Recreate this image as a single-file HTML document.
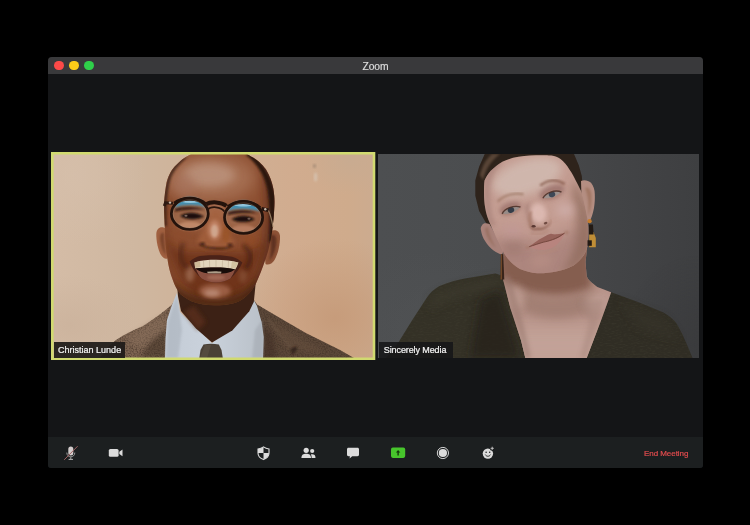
<!DOCTYPE html>
<html lang="en">
<head>
<meta charset="utf-8">
<title>Zoom</title>
<style>
  html,body{margin:0;padding:0;background:#000;}
  body{width:750px;height:525px;position:relative;overflow:hidden;font-family:"Liberation Sans",Arial,sans-serif;}
  #win{position:absolute;left:48px;top:57px;width:655px;height:411px;background:#141517;border-radius:4px 4px 3px 3px;overflow:hidden;}
  #titlebar{position:absolute;left:0;top:0;width:100%;height:17px;background:#39393b;}
  #title{will-change:transform;position:absolute;left:0;width:100%;top:3.8px;-webkit-text-stroke:.2px #dcdcdc;text-align:center;color:#dcdcdc;font-size:10.3px;line-height:12px;letter-spacing:-0.1px;}
  .tl{position:absolute;top:3.8px;width:9.6px;height:9.6px;border-radius:50%;}
  #toolbar{position:absolute;left:0;top:380.4px;width:100%;height:31px;background:#1c1f20;}
  .label{position:absolute;height:15.5px;line-height:17px;overflow:hidden;will-change:transform;-webkit-text-stroke:.22px #f2f2f2;color:#f2f2f2;font-size:9px;background:rgba(22,22,24,.88);white-space:nowrap;}
  #end{will-change:transform;position:absolute;left:643.6px;top:448.7px;color:#e24c4e;-webkit-text-stroke:.2px #e24c4e;font-size:8px;line-height:10px;white-space:nowrap;letter-spacing:-0.05px;}
  #art{position:absolute;left:0;top:0;}
</style>
</head>
<body>
<div id="win">
  <div id="titlebar">
    <div class="tl" style="left:6.2px;background:#fc4a48;"></div>
    <div class="tl" style="left:21.2px;background:#fdcb18;"></div>
    <div class="tl" style="left:36px;background:#2fd04a;"></div>
    <div id="title">Zoom</div>
  </div>
  <div id="toolbar"></div>
</div>

<svg id="art" width="750" height="525" viewBox="0 0 750 525">
  <defs>
    <clipPath id="cL"><rect x="53.6" y="154.6" width="319.1" height="202.8"/></clipPath>
    <clipPath id="cR"><rect x="378.7" y="154" width="319.6" height="203.7"/></clipPath>
    <filter id="soft" x="0" y="0" width="100%" height="100%" filterUnits="userSpaceOnUse" color-interpolation-filters="sRGB"><feGaussianBlur stdDeviation=".45"/></filter>
    <filter id="b1" x="-20%" y="-20%" width="140%" height="140%"><feGaussianBlur stdDeviation="1"/></filter>
    <filter id="b2" x="-30%" y="-30%" width="160%" height="160%"><feGaussianBlur stdDeviation="2"/></filter>
    <filter id="b4" x="-40%" y="-40%" width="180%" height="180%"><feGaussianBlur stdDeviation="4"/></filter>
    <filter id="b8" x="-50%" y="-50%" width="200%" height="200%"><feGaussianBlur stdDeviation="8"/></filter>
    <filter id="b20" x="-60%" y="-60%" width="220%" height="220%"><feGaussianBlur stdDeviation="20"/></filter>
    <filter id="tweed" x="0" y="0" width="100%" height="100%" color-interpolation-filters="sRGB">
      <feTurbulence type="fractalNoise" baseFrequency="0.75" numOctaves="2" seed="3" result="n"/>
      <feColorMatrix in="n" type="matrix" values="0 0 0 0 0.25  0 0 0 0 0.19  0 0 0 0 0.15  0 0 0 1.6 -0.62" result="n2"/>
      <feComposite in="n2" in2="SourceGraphic" operator="in" result="n3"/>
      <feMerge><feMergeNode in="SourceGraphic"/><feMergeNode in="n3"/></feMerge>
    </filter>
    <filter id="knit" x="0" y="0" width="100%" height="100%" color-interpolation-filters="sRGB">
      <feTurbulence type="fractalNoise" baseFrequency="0.25 0.9" numOctaves="2" seed="8" result="n"/>
      <feColorMatrix in="n" type="matrix" values="0 0 0 0 0.26  0 0 0 0 0.25  0 0 0 0 0.20  0 0 0 1.0 -0.45" result="n2"/>
      <feComposite in="n2" in2="SourceGraphic" operator="in" result="n3"/>
      <feMerge><feMergeNode in="SourceGraphic"/><feMergeNode in="n3"/></feMerge>
    </filter>
    <radialGradient id="rgF" cx="0.5" cy="0.5" r="0.5"><stop offset="0" stop-color="#cbb29c" stop-opacity=".8"/><stop offset="1" stop-color="#cbb29c" stop-opacity="0"/></radialGradient>
    <radialGradient id="rgA" cx="0.5" cy="0.5" r="0.5"><stop offset="0" stop-color="#c69b7a" stop-opacity=".95"/><stop offset="1" stop-color="#c69b7a" stop-opacity="0"/></radialGradient>
    <radialGradient id="rgB" cx="0.5" cy="0.5" r="0.5"><stop offset="0" stop-color="#d6c0ac" stop-opacity=".9"/><stop offset="1" stop-color="#d6c0ac" stop-opacity="0"/></radialGradient>
    <radialGradient id="rgC" cx="0.5" cy="0.5" r="0.5"><stop offset="0" stop-color="#c8ab91" stop-opacity=".9"/><stop offset="1" stop-color="#c8ab91" stop-opacity="0"/></radialGradient>
    <radialGradient id="rgD" cx="0.5" cy="0.5" r="0.5"><stop offset="0" stop-color="#353537" stop-opacity=".8"/><stop offset="1" stop-color="#353537" stop-opacity="0"/></radialGradient>
    <radialGradient id="rgE" cx="0.5" cy="0.5" r="0.5"><stop offset="0" stop-color="#525456" stop-opacity=".8"/><stop offset="1" stop-color="#525456" stop-opacity="0"/></radialGradient>
    <linearGradient id="bgL" x1="0" x2="1" y1="0" y2="0">
      <stop offset="0" stop-color="#d4bca6"/>
      <stop offset="0.26" stop-color="#cfb7a0"/>
      <stop offset="0.5" stop-color="#cfb196"/>
      <stop offset="0.75" stop-color="#d1ac8f"/>
      <stop offset="0.92" stop-color="#cfab8c"/>
      <stop offset="1" stop-color="#ccab8f"/>
    </linearGradient>
    <linearGradient id="shirtG" x1="0" x2="1" y1="0" y2="0">
      <stop offset="0" stop-color="#c4ccd6"/>
      <stop offset="0.45" stop-color="#cad2dc"/>
      <stop offset="1" stop-color="#b9c0c8"/>
    </linearGradient>
    <linearGradient id="bgR" x1="0" x2="1" y1="0" y2="0">
      <stop offset="0" stop-color="#4d4f51"/>
      <stop offset="0.35" stop-color="#4b4d4f"/>
      <stop offset="0.7" stop-color="#444547"/>
      <stop offset="1" stop-color="#3e3f41"/>
    </linearGradient>
    <clipPath id="cHeadL"><path d="M164,204 C164.5,195 165.5,188 166.7,182 C169,174 172,169 176.3,165 C180,161 184,158 189,155.3 C196,151 205,148 220,148 C235,148 244,152 251,156.4 C258,160 262,164 265.9,169.2 C270,176 272,182 273.3,188.4 C274.5,196 274.6,200 274.4,205.5 C274,215 273,225 272,232 C270,245 267.5,254 264.5,262 C262,269 259.5,276 256,283.2 C253,289 250,293 246.4,296 C242,300 238,302 233.6,303.2 C227,305 221,305.3 214.7,305.3 C206,305.3 198,304 192,301.6 C187,299 184,297 180.8,294.4 C177,290 174.5,285 172.8,280 C170,273 168.5,266 167.5,259.2 C166,250 165,240 165,232 C164.5,222 164,212 164,204 Z"/></clipPath>
    <clipPath id="cHeadR"><path d="M489.8,223 C487.5,218 486,213 485.2,207.9 C484.3,203 484,198 484,192.7 C484,188 484,184 484.5,180.5 C486,177 488,174 490.5,171 C493.5,168 496.5,165.5 500,163.2 C503.5,161 508,159.3 513,157.8 C520,156 528,155.2 536,155.2 C544,155.2 548,155.2 551.3,155.6 C555,156 558,157.5 560.5,159.1 C564,162 567,165.5 569.6,169.8 C572,173 574,177 575.7,180.5 C578,184.5 579.5,188 581,191.1 C582,194 582.7,196 583.3,198.8 C585,206 586.5,214 587.9,221.6 C588.8,230 588.6,238 587.5,244.7 C586.8,249 585.7,252 584,255 C581,259.5 577.5,262.5 573.6,265.5 C568,268.5 562,270.3 556.3,271.5 C550,272.8 543.5,273.5 537.2,273.3 C531,272.7 525.5,271.2 519.9,269 C515,266 511,262.5 507.7,258.5 C505.5,255.5 503.5,252.5 502,249 C498,241 493.5,232 489.8,223 Z"/></clipPath>
    <clipPath id="cChestR"><path d="M503.5,252 L502.7,278 L510.4,308.3 L521,340.3 L525.3,358 L586.7,358 L601.6,319 L611.2,292.3 L597.3,287 C592,283 588,280 586.7,276.3 L585.5,262 L588,240 Z"/></clipPath>
  </defs>

  <!-- LEFT TILE -->
  <rect x="51" y="152" width="324.3" height="208" fill="#d1da70"/>
  <g clip-path="url(#cL)" id="photoL"><g filter="url(#soft)">
    <rect x="53" y="154" width="320" height="204" fill="url(#bgL)"/>
    <!-- background mottling -->
    <ellipse cx="75" cy="175" rx="70" ry="70" fill="url(#rgB)" opacity=".7"/>
    <ellipse cx="335" cy="318" rx="90" ry="80" fill="url(#rgA)"/>
    <ellipse cx="70" cy="325" rx="70" ry="50" fill="url(#rgF)"/>
    <ellipse cx="350" cy="160" rx="45" ry="35" fill="url(#rgC)"/>
    <ellipse cx="314.5" cy="166" rx="1.6" ry="2" fill="#9a8270" opacity=".7" filter="url(#b1)"/>
    <ellipse cx="315.6" cy="177" rx="1.8" ry="4.5" fill="#d8cabc" opacity=".6" filter="url(#b1)"/>
    <!-- jacket -->
    <g filter="url(#tweed)">
      <path d="M100,358 L108,347 L116,340 C125,334 134,330 142.7,326.3 C150,322 157,316.5 164,311.3 L171.5,305 L175,300 L178,330 L170,358 Z" fill="#7e6552"/>
      <path d="M254,300 L257,304.5 L280,318 L305.3,332.7 L339.5,349.7 L354,358 L255,358 Z" fill="#5c4839"/>
    </g>
    <g filter="url(#b2)" opacity=".5">
      <path d="M125,338 L165,314 L167,328 L140,348 Z" fill="#8a705c"/>
      <path d="M268,320 L300,338 L325,352 L290,350 Z" fill="#66503e"/>
      <path d="M150,342 L166,328 L166,358 L140,358 Z" fill="#3e2e24"/>
      <path d="M263,325 L273,335 L277,358 L263,358 Z" fill="#3e2c22"/>
    </g>
    <path d="M290.5,349 L296.5,346 L297,350 L292.5,355 Z" fill="#2a1c16" opacity=".75" filter="url(#b1)"/>
    <path d="M291,348 C282,338 274,328 268,318" stroke="#74604e" stroke-width="1.2" fill="none" opacity=".5" filter="url(#b1)"/>
    <!-- shirt -->
    <path d="M177,293 L171.8,305.5 L167,320 L165.5,338 L165,358 L263,358 L263.7,337 L261.6,322 L257,306 L253,298.5 L250,310 L212,343 L180,312 Z" fill="url(#shirtG)"/>
    <path d="M177,293 L173,306 L168,322 L166,358 L178,358 L182,330 Z" fill="#aab2bc" opacity=".6" filter="url(#b1)"/>
    <path d="M262,320 L263.5,340 L263,358 L252,358 L255,330 Z" fill="#a0a6ae" opacity=".5" filter="url(#b1)"/>
    <!-- tie -->
    <path d="M203.5,344.4 C208,343.6 214,343.6 218.8,344.4 L221.5,350 L222.8,358 L199.3,358 L200.5,350 Z" fill="#4a4036"/>
    <path d="M205,345 L211,345 L207,358 L200,358 Z" fill="#5c5145" opacity=".6"/>
    <!-- neck -->
    <path d="M177,285 L178,296 L181,311 L196,328.4 L212,342.5 L232.3,330.5 L249.3,311.3 L253.8,302 L256,280 Z" fill="#3c2115"/>
    <path d="M184,312 L198,330 L206,322 L194,306 Z" fill="#5a2e1a" opacity=".8" filter="url(#b2)"/>
    <!-- ears -->
    <path d="M166.5,229 C162,225.5 156.5,227 156.3,234 C156.2,241 158,250 161,255 C163,258 165.5,259.5 167.5,258.4 L169,245 Z" fill="#a06040"/>
    <path d="M164,233 C160.5,232 159.5,236 160.5,242 C161.5,248 163.5,253 166,255 C164.5,248 164,240 164,233 Z" fill="#6a3822" opacity=".75" filter="url(#b1)"/>
    <path d="M268,233 C271,229.5 279,228 280,236 C280.3,244 278,254 274.5,260 C272,264 268,265.5 265.5,264 L264,248 Z" fill="#8c5236"/>
    <path d="M270,236 C274,233 277,236 276.5,242 C276,250 273,257 269,261 C271,254 271.5,244 270,236 Z" fill="#552a1a" opacity=".8" filter="url(#b1)"/>
    <!-- head -->
    <path id="headL" d="M164,204 C164.5,195 165.5,188 166.7,182 C169,174 172,169 176.3,165 C180,161 184,158 189,155.3 C196,151 205,148 220,148 C235,148 244,152 251,156.4 C258,160 262,164 265.9,169.2 C270,176 272,182 273.3,188.4 C274.5,196 274.6,200 274.4,205.5 C274,215 273,225 272,232 C270,245 267.5,254 264.5,262 C262,269 259.5,276 256,283.2 C253,289 250,293 246.4,296 C242,300 238,302 233.6,303.2 C227,305 221,305.3 214.7,305.3 C206,305.3 198,304 192,301.6 C187,299 184,297 180.8,294.4 C177,290 174.5,285 172.8,280 C170,273 168.5,266 167.5,259.2 C166,250 165,240 165,232 C164.5,222 164,212 164,204 Z" fill="#8c4e30"/>
    <g clip-path="url(#cHeadL)">
      <!-- forehead light -->
      <ellipse cx="210" cy="178" rx="46" ry="24" fill="#a66f52" filter="url(#b8)"/>
      <ellipse cx="209" cy="175" rx="26" ry="12" fill="#b98f78" opacity=".95" filter="url(#b4)"/>
      <ellipse cx="184" cy="184" rx="11" ry="11" fill="#a8755e" opacity=".6" filter="url(#b4)"/>
      <!-- mid-face -->
      <ellipse cx="212" cy="219" rx="38" ry="12" fill="#a2684a" opacity=".55" filter="url(#b4)"/>
      <ellipse cx="216" cy="212" rx="8" ry="9" fill="#b07a60" opacity=".7" filter="url(#b2)"/>
      <!-- right side shadow -->
      <path d="M262,160 L282,160 L282,270 L252,302 L240,300 C256,282 265,250 266,215 C266,195 265,177 262,160 Z" fill="#4c2414" opacity=".6" filter="url(#b4)"/>
      <!-- lower face darker, saturated -->
      <path d="M164,236 C172,262 180,284 196,300 L236,300 C250,286 258,266 264,240 C250,258 232,252 216,250 C200,252 180,258 164,236 Z" fill="#5e2810" opacity=".62" filter="url(#b4)"/>
      <!-- cheeks -->
      <ellipse cx="180" cy="236" rx="8" ry="4" fill="#8e4c2a" opacity=".5" filter="url(#b4)"/>
      <ellipse cx="250" cy="240" rx="7" ry="5" fill="#96491f" opacity=".6" filter="url(#b4)"/>
      <!-- mouth-side lighter -->
      <ellipse cx="190" cy="274" rx="4.5" ry="8" fill="#a5735a" opacity=".7" filter="url(#b2)"/>
      <ellipse cx="243" cy="276" rx="4" ry="7" fill="#8c573c" opacity=".6" filter="url(#b2)"/>
      <!-- nose -->
      <path d="M210,208 C209,218 205,229 198.5,238 C196.5,242 198.5,246.5 204,247.5 C211,250 222,250 229,248.5 C234.5,247.5 235.5,243 233,239 C227,230 223,219 222,209 Z" fill="#a3603e" opacity=".85" filter="url(#b2)"/>
      <ellipse cx="226" cy="234" rx="4" ry="9" fill="#96501e" opacity=".6" filter="url(#b2)"/>
      <ellipse cx="214.5" cy="230" rx="6" ry="10" fill="#c88c70" opacity=".9" filter="url(#b2)"/>
      <ellipse cx="214.5" cy="231" rx="3.4" ry="6.2" fill="#d0a890" opacity=".95" filter="url(#b1)"/>
      <path d="M197.5,243.5 C202,250 228,252 235,245.5 C228,248.8 205,248.3 197.5,243.5 Z" fill="#32140c" opacity=".85" filter="url(#b1)"/>
      <ellipse cx="202.5" cy="244" rx="2.8" ry="1.7" fill="#2a100a" opacity=".7" filter="url(#b1)"/>
      <ellipse cx="230" cy="245" rx="2.8" ry="1.7" fill="#2a100a" opacity=".7" filter="url(#b1)"/>
      <!-- chin/jaw shadow -->
      <path d="M172,280 C188,303 240,306 258,278 L264,312 L168,312 Z" fill="#43200f" opacity=".8" filter="url(#b4)"/>
      <ellipse cx="215" cy="291" rx="16" ry="7" fill="#a0644a" opacity=".9" filter="url(#b2)"/>
      <ellipse cx="212" cy="293" rx="8" ry="3.5" fill="#ba8a76" opacity=".95" filter="url(#b2)"/>
      <!-- left face edge -->
      <path d="M163,200 L169,200 C167,225 169,255 177,285 L168,285 Z" fill="#6a3620" opacity=".35" filter="url(#b2)"/>
      <!-- hair -->
      <path d="M249,153 C263,161 271.5,176 275,195 L276,242 L269,242 C270,226 270,205 267.5,190 C264,173 256,163 246,155 Z" fill="#2a1810" filter="url(#b1)"/>
      <path d="M181,158 C170,166 165,180 163,204 L164,226 L167,226 C166,210 167,190 171,178 C174,170 180,163 188,157 Z" fill="#3a2218" opacity=".8" filter="url(#b1)"/>
    </g>
    <!-- smile lines -->
    <path d="M183.5,243 C181,248 180,253 181,258 C182,262 185,266 188,268" stroke="#431e12" stroke-width="4" fill="none" opacity=".6" filter="url(#b2)"/>
    <path d="M243,245 C247,248 250,252 250.4,256 C250.5,261 248,266 245,269" stroke="#36170c" stroke-width="4" fill="none" opacity=".65" filter="url(#b2)"/>
    <!-- mouth -->
    <path d="M189.6,261.6 C193,258.5 196.5,256.7 200,256 C205,255.2 211,255 216,255.2 C222,255.2 227,255.8 232,256.8 C236,258 239.5,260 242.4,262.4 C240,268 236,273.5 230.4,278.4 C226,281 221,282.4 216,282.4 C211,282.4 206,281 201.6,278.4 C196,274 192,268 189.6,261.6 Z" fill="#4a2218"/>
    <path d="M194.4,262.4 C201,260.3 209,259.8 216,259.8 C224,259.8 232,260.6 238.4,262.4 C237.5,265.3 236.5,267.5 235.2,269.4 C229,268 222,267.6 216,267.6 C209,267.6 201,268 195.2,268.6 Z" fill="#e3d6bd"/>
    <path d="M203.5,260.6 L203.8,267.8 M209.5,260.2 L209.7,267.6 M216,260 L216,267.6 M222.5,260.2 L222.3,267.6 M228.5,260.8 L228.2,268" stroke="#a89478" stroke-width=".5" opacity=".7" fill="none"/>
    <path d="M194.4,262.4 L200,261 L200.5,267 L195.2,268 Z" fill="#c4ae88" opacity=".7"/>
    <path d="M232,261.3 L238.4,262.4 L235.2,268.8 L231,268 Z" fill="#c8b48e" opacity=".6"/>
    <path d="M195.2,268.4 C201,267.8 209,267.4 216,267.4 C222,267.4 229,267.8 235.2,269.2 C233,271.5 230,273 226,273.4 L206,273.4 C201,272.4 198,270.8 195.2,268.4 Z" fill="#170b08"/>
    <path d="M207,271.8 C212,271 218,271 221.5,271.8 L221,273.6 L208,273.6 Z" fill="#c8b8a0" opacity=".85"/>
    <path d="M196,269 C199,271 203,272.8 207,273.2 C213,274 220,274 226,273.2 C230,272.5 233,271 235,269.2 C234,273 232,276 230.4,278.4 C226,281 221,282.4 216,282.4 C211,282.4 206,281 201.6,278.4 C199,276 197,272.5 196,269 Z" fill="#8a5040"/>
    <ellipse cx="216" cy="277.5" rx="9" ry="2.6" fill="#a66e5a" opacity=".8" filter="url(#b1)"/>
    <!-- lens tint -->
    <ellipse cx="189.8" cy="213.8" rx="17.5" ry="14.8" fill="#c8a98e" opacity=".2"/>
    <ellipse cx="243.6" cy="217.4" rx="18" ry="15.2" fill="#c8a98e" opacity=".16"/>
    <ellipse cx="190" cy="226" rx="12" ry="4.2" fill="#bf8868" opacity="1" filter="url(#b1)"/>
    <ellipse cx="243.5" cy="229.5" rx="12" ry="4.2" fill="#b67c5e" opacity="1" filter="url(#b1)"/>
    <!-- eyes + brows inside lenses -->
    <path d="M175,209 C182,206 196,206 205,209.5 C198,209.3 184,209.3 175,211.5 Z" fill="#2e160e" opacity=".9" filter="url(#b1)"/>
    <path d="M228,212.5 C236,209 250,209.5 258,213.5 C250,212.6 237,212.6 228,215 Z" fill="#28120c" opacity=".9" filter="url(#b1)"/>
    <path d="M180,216 C186,211.5 197,211.5 204,216.5 C197,220.2 187,220.2 180,216 Z" fill="#1c0d09" filter="url(#b1)"/>
    <path d="M231.5,219.2 C238,214.5 249,214.5 255,219.2 C248,223 238,223 231.5,219.2 Z" fill="#1a0b07" filter="url(#b1)"/>
    <ellipse cx="186" cy="215.8" rx="1.6" ry="1" fill="#b8a090" opacity=".6"/>
    <ellipse cx="249" cy="218.8" rx="1.6" ry="1" fill="#b8a090" opacity=".5"/>
    <!-- lens reflections -->
    <path d="M174,207.5 C177,199.5 185,197.2 190,197.2 C196,197.2 204,200 207,207.5 C198,204.2 184,204.2 174,207.5 Z" fill="#4290b2" filter="url(#b1)"/>
    <path d="M181,201.8 C187,199.3 194,199.3 200,201.8 C194,203.4 187,203.4 181,201.8 Z" fill="#9acbe0" opacity=".9"/>
    <path d="M227,211 C230,203.5 238,200.7 244,200.7 C250,200.7 257,204 260,211.5 C251,208.2 237,207.8 227,211 Z" fill="#4290b2" filter="url(#b1)"/>
    <path d="M233,205.2 C239,202.8 247,202.8 252,205.6 C247,207 239,206.8 233,205.2 Z" fill="#9acbe0" opacity=".9"/>
    <!-- glasses frame -->
    <ellipse cx="189.8" cy="213.8" rx="18.4" ry="15.6" fill="none" stroke="#24130c" stroke-width="2.9"/>
    <ellipse cx="243.6" cy="217.4" rx="19" ry="16" fill="none" stroke="#22120b" stroke-width="2.9"/>
    <path d="M174.5,203.5 C182,197.3 198,197.3 205.5,204" stroke="#22120b" stroke-width="3.6" fill="none"/>
    <path d="M228,207 C236,200.3 252,200.8 260,208" stroke="#22120b" stroke-width="3.6" fill="none"/>
    <ellipse cx="189.8" cy="213.8" rx="16.8" ry="14" fill="none" stroke="#b09880" stroke-width=".6" opacity=".55"/>
    <ellipse cx="243.6" cy="217.4" rx="17.4" ry="14.4" fill="none" stroke="#b09880" stroke-width=".6" opacity=".55"/>
    <path d="M206,204.3 C211,201.3 221,201.8 226.5,205.8" stroke="#24130c" stroke-width="4" fill="none"/>
    <path d="M207.8,209.5 C211,206 221,206.5 224.3,211.5" stroke="#2a160e" stroke-width="1.8" fill="none"/>
    <path d="M173,203.2 L165.5,202.8 L164.3,206" stroke="#2e1a12" stroke-width="3" fill="none"/>
    <circle cx="170" cy="202.6" r="1.2" fill="#c8b8a8"/>
    <path d="M261.5,208.8 L268.5,210.3" stroke="#24140e" stroke-width="3.6" fill="none"/>
    <circle cx="265.3" cy="209.3" r="1.2" fill="#c8b8a8"/>
    <path d="M268.5,210.5 C270.5,215 272,221 273,227" stroke="#a89070" stroke-width="1.2" fill="none" opacity=".8"/>
  </g></g>

  <!-- RIGHT TILE -->
  <g clip-path="url(#cR)" id="photoR"><g filter="url(#soft)">
    <rect x="378" y="154" width="321" height="204" fill="url(#bgR)"/>
    <ellipse cx="700" cy="345" rx="80" ry="90" fill="url(#rgD)" opacity=".5"/>
    <ellipse cx="430" cy="330" rx="100" ry="80" fill="url(#rgE)" opacity=".6"/>
    <!-- blouse -->
    <g filter="url(#knit)">
    <path d="M386,358 L398.4,342.5 L412,320.5 L426.3,298.5 C431,291.5 436,287.5 441,285.5 C449,281.8 457,279.8 465,278.4 L495.5,273.6 L503,276 L530,300 L535,358 Z" fill="#343126"/>
    <path d="M605,290 L611.2,292.3 L637.9,302 L663.5,312.6 C669,316 673,319 676.3,323.3 C681,331 684,338 686.9,344.6 L692.5,358 L580,358 Z" fill="#302d24"/>
    </g>
    <!-- blouse shading -->
    <path d="M430,298 C445,288 470,282 497,277 L505,290 C480,290 450,298 430,310 Z" fill="#3e3a2e" opacity=".6" filter="url(#b4)"/>
    <path d="M480,300 L500,290 L520,358 L470,358 Z" fill="#201e18" opacity=".6" filter="url(#b4)"/>
    <path d="M620,300 L665,318 L680,340 L640,330 Z" fill="#37342a" opacity=".5" filter="url(#b4)"/>
    <!-- chest / neck skin -->
    <path id="chestR" d="M503.5,252 L502.7,278 L510.4,308.3 L521,340.3 L525.3,358 L586.7,358 L601.6,319 L611.2,292.3 L597.3,287 C592,283 588,280 586.7,276.3 L585.5,262 L588,240 Z" fill="#b8948a"/>
    <g clip-path="url(#cChestR)">
      <!-- vertical falloff: dark under chin -> lighter at bottom -->
      <rect x="495" y="326" width="125" height="40" fill="#c4a49a" opacity=".85" filter="url(#b8)"/>
      <path d="M498,250 L592,240 L592,288 C572,298 540,298 516,288 L498,276 Z" fill="#80594a" opacity=".9" filter="url(#b4)"/>
      <path d="M520,290 C540,300 570,300 596,288 L598,308 C575,322 540,322 522,310 Z" fill="#9a776b" opacity=".7" filter="url(#b4)"/>
      <ellipse cx="597" cy="303" rx="12" ry="10" fill="#c2a298" opacity=".8" filter="url(#b4)"/>
      <ellipse cx="515" cy="298" rx="9" ry="12" fill="#be9c92" opacity=".85" filter="url(#b4)"/>
      <path d="M503,278 L510.4,308.3 L521,340.3 L525.3,358 L531,358 L520,310 L510,276 Z" fill="#94746a" opacity=".5" filter="url(#b2)"/>
      <path d="M578,300 L604,300 L596,330 L586,358 L580,358 L589,322 Z" fill="#a08076" opacity=".4" filter="url(#b2)"/>
    </g>
    <!-- hair -->
    <path d="M489,227 L485.2,221.6 L479.1,211 L475.3,195.7 L475.3,180.5 L479.1,166.8 L484.5,154.6 L486,150 L573,150 L574.2,154.6 L578.8,165.2 L581.8,175.9 L583.5,199 L560,200 L500,225 Z" fill="#2e231b"/>
    <path d="M480,175 C482,166 486,159 492,154 L500,154 C492,160 486,168 483,180 Z" fill="#6a5242" opacity=".7" filter="url(#b1)"/>
    <!-- ears -->
    <path d="M581,181 C584,179.5 588.5,180.5 591,182.8 C593.5,186 594.8,190 594.8,194.2 C595,199 594.8,203 594,207.9 C593,212 592.5,215 591,218.6 C590,220.5 589,221.5 587.9,221.8 L582,215 Z" fill="#b48e82"/>
    <path d="M585,188 C588,186 591,189 591.5,195 C592,203 590.5,211 588,216 C589,208 589,198 585,188 Z" fill="#9a6e58" opacity=".7" filter="url(#b1)"/>
    <path d="M489.5,224 C486,222.5 483,223 482.2,225 C480.5,227 480.6,228.5 480.9,230 C481.5,234 483,238 485.2,241.2 C487.5,245 490.5,248 493.9,250.7 C496.5,252.5 499,253.8 502,254.5 L504,250 Z" fill="#a8827a"/>
    <path d="M485,228 C485,234 489,242 496,248 C492,241 489,234 488,227 Z" fill="#946c5c" opacity=".7" filter="url(#b1)"/>
    <!-- face -->
    <path id="headR" d="M489.8,223 C487.5,218 486,213 485.2,207.9 C484.3,203 484,198 484,192.7 C484,188 484,184 484.5,180.5 C486,177 488,174 490.5,171 C493.5,168 496.5,165.5 500,163.2 C503.5,161 508,159.3 513,157.8 C520,156 528,155.2 536,155.2 C544,155.2 548,155.2 551.3,155.6 C555,156 558,157.5 560.5,159.1 C564,162 567,165.5 569.6,169.8 C572,173 574,177 575.7,180.5 C578,184.5 579.5,188 581,191.1 C582,194 582.7,196 583.3,198.8 C585,206 586.5,214 587.9,221.6 C588.8,230 588.6,238 587.5,244.7 C586.8,249 585.7,252 584,255 C581,259.5 577.5,262.5 573.6,265.5 C568,268.5 562,270.3 556.3,271.5 C550,272.8 543.5,273.5 537.2,273.3 C531,272.7 525.5,271.2 519.9,269 C515,266 511,262.5 507.7,258.5 C505.5,255.5 503.5,252.5 502,249 C498,241 493.5,232 489.8,223 Z" fill="#c49d92"/>
    <g clip-path="url(#cHeadR)">
      <!-- forehead light -->
      <ellipse cx="527" cy="177" rx="36" ry="17" fill="#d0b8ae" opacity=".95" filter="url(#b4)" transform="rotate(-18 527 177)"/>
      <!-- left hairline shadow -->
      <path d="M484,180 C486,172 490,165 497,160 L502,163 C494,170 490,180 490,194 C490,206 492,216 496,226 L488,226 C485,212 483,196 484,180 Z" fill="#94706a" opacity=".4" filter="url(#b2)"/>
      <!-- lower-face falloff -->
      <path d="M490,232 C510,246 560,244 592,218 L594,290 L490,290 Z" fill="#96706a" opacity=".5" filter="url(#b8)"/>
      <!-- right side shadow -->
      <path d="M574,178 L592,215 L592,250 L576,268 L560,273 C576,255 582,232 572,194 Z" fill="#8e6a5c" opacity=".75" filter="url(#b4)"/>
      <!-- cheeks -->
      <ellipse cx="513" cy="231" rx="11" ry="8" fill="#c09894" opacity=".75" filter="url(#b4)"/>
      <ellipse cx="565" cy="210" rx="9" ry="7" fill="#cfaeaa" opacity=".8" filter="url(#b4)"/>
      <ellipse cx="514" cy="247" rx="11" ry="8" fill="#8c6860" opacity=".32" filter="url(#b4)"/>
      <!-- chin light -->
      <ellipse cx="541" cy="261" rx="11" ry="6" fill="#b88f85" opacity=".8" filter="url(#b4)" transform="rotate(-12 541 261)"/>
      <!-- eye sockets -->
      <ellipse cx="510" cy="208.5" rx="11" ry="5.5" fill="#98706a" opacity=".8" filter="url(#b2)" transform="rotate(-20 509 208)"/>
      <ellipse cx="552" cy="192" rx="13" ry="6.5" fill="#98706a" opacity=".8" filter="url(#b2)" transform="rotate(-20 552 192)"/>
      <!-- nose shading -->
      <path d="M524,205 C526,214 528,222 531,228 L536,229 C532,222 530,212 530,203 Z" fill="#a07a72" opacity=".6" filter="url(#b2)"/>
      <ellipse cx="538.5" cy="213" rx="8" ry="10" fill="#ddbab2" opacity=".95" filter="url(#b2)" transform="rotate(-15 538.5 213)"/>
    </g>
    <!-- brows -->
    <path d="M497.6,201.5 C502,197.5 506,195.5 510,194.6 C515,193.6 520,193.6 523.5,194.3" stroke="#9c7662" stroke-width="2.4" fill="none" opacity=".7" filter="url(#b1)"/>
    <path d="M540.3,185.5 C545,182 549,180.6 553,180.4 C557,180.4 561,181.6 564.7,184" stroke="#84594a" stroke-width="2.4" fill="none" opacity=".8" filter="url(#b1)"/>
    <!-- eyes -->
    <g transform="rotate(-17 510.8 210.2)">
      <ellipse cx="510.8" cy="210.2" rx="9.8" ry="4.2" fill="#b08678" opacity=".8" filter="url(#b1)"/>
      <path d="M502,211 C505,207.2 515,206.6 520.5,210 C515,213.5 506,213.8 502,211 Z" fill="#978b87"/>
      <ellipse cx="511" cy="210.1" rx="3.3" ry="2.8" fill="#343c48"/>
      <path d="M501.5,211.2 C505,206.8 515,206 521,210" stroke="#4e322a" stroke-width="1.4" fill="none" opacity=".9"/>
    </g>
    <g transform="rotate(-15 551.7 194.6)">
      <ellipse cx="551.7" cy="194.6" rx="9.8" ry="4.2" fill="#b08678" opacity=".8" filter="url(#b1)"/>
      <path d="M542.8,195.6 C546,191.6 556,191 561.2,194.6 C556,198 547,198.4 542.8,195.6 Z" fill="#9d918d"/>
      <ellipse cx="552" cy="194.5" rx="3.3" ry="2.8" fill="#3e4856"/>
      <path d="M542.3,195.8 C546,191.2 556,190.4 561.8,194.6" stroke="#4e322a" stroke-width="1.4" fill="none" opacity=".9"/>
    </g>
    <!-- nose -->
    <path d="M528.5,212 C527.5,218 528,224 530.5,228 L534,229.5 C531.5,224 531,218 532,211 Z" fill="#a87c6c" opacity=".75" filter="url(#b1)"/>
    <path d="M529.5,224.5 C531,228 535,229 538,227.6 C542,229 547.5,226.5 550.8,221 C549,227.5 543.5,231 538,230 C534,231.3 530,229 529.5,224.5 Z" fill="#8c5e50" opacity=".9" filter="url(#b1)"/>
    <ellipse cx="533.6" cy="226.2" rx="2" ry="1.3" fill="#50302a" opacity=".9"/>
    <ellipse cx="545.6" cy="223.2" rx="1.9" ry="1.2" fill="#5c3830" opacity=".8" transform="rotate(-20 545.6 223.2)"/>
    <path d="M548,226 C550.5,224.5 551.5,222 551.2,219" stroke="#a87c6c" stroke-width="1.2" fill="none" opacity=".6" filter="url(#b1)"/>
    <path d="M531,233 C536,235 544,234 549,230" stroke="#b08474" stroke-width="2.5" fill="none" opacity=".5" filter="url(#b1)"/>
    <!-- mouth -->
    <path d="M528.9,246.8 C533,243.6 538,240 543,237.4 C546,235.6 549,234 551,233.7 C553.5,234.5 555,234.6 557,234.3 C560,233.8 562.5,233.4 564.7,232.9 C562,241 554.5,248.2 546.4,249.8 C540,250.6 533.5,249.2 528.9,246.8 Z" fill="#b8847e"/>
    <path d="M528.9,246.8 C533,243.6 538,240 543,237.4 C546,235.6 549,234 551,233.7 C553.5,234.5 555,234.6 557,234.3 C560,233.8 562.5,233.4 564.7,232.9 C561,236.8 557,238.6 552.5,240 C549,241.2 546,241.8 543.3,242.2 C538,243.8 533,245.6 528.9,246.8 Z" fill="#96625a"/>
    <path d="M528.9,246.8 C534,245.2 539,243.4 543.3,242.2 C548,241.2 556,239.4 564.7,233" stroke="#70443a" stroke-width=".9" fill="none"/>
    <ellipse cx="527.5" cy="247.5" rx="2.2" ry="1.8" fill="#a67a6a" opacity=".7" filter="url(#b1)"/>
    <ellipse cx="566.5" cy="232.5" rx="2.2" ry="2" fill="#a67a6a" opacity=".7" filter="url(#b1)"/>
    <path d="M538,253 C544,254 552,252 557,248" stroke="#b48a7a" stroke-width="2" fill="none" opacity=".6" filter="url(#b1)"/>
    <!-- earrings -->
    <path d="M500.9,254.2 L503.2,254.2 L504.3,279.5 L500.5,279.5 Z" fill="#38241a"/>
    <path d="M500.9,254.2 L502,254.2 L502,279.5 L500.5,279.5 Z" fill="#6e4626"/>
    <circle cx="589.6" cy="221.2" r="2.1" fill="#c57d2c"/>
    <path d="M589.2,232 L593.5,232 L595.8,238 L595.8,247.3 L589.2,247.3 Z" fill="#c08e36"/>
    <path d="M588.9,224.5 L593,224.5 L593.6,234.5 L588.9,234.5 Z" fill="#231a14"/>
    <path d="M587.5,240.3 L591.8,240.3 L591.8,245.8 L587.5,245.8 Z" fill="#231a14"/>
  </g></g>

  <!-- TOOLBAR ICONS -->
  <g id="icons">
    <!-- mic (muted) -->
    <rect x="68.3" y="446.4" width="5" height="9.2" rx="2.5" fill="#d2cccc"/>
    <path d="M66.8,452.6 C66.8,458.2 74.8,458.2 74.8,452.6" stroke="#a8a8a8" stroke-width=".9" fill="none"/>
    <path d="M70.8,457.2 L70.8,459.2 M68.6,459.4 L73,459.4" stroke="#b0b0b0" stroke-width="1" fill="none"/>
    <path d="M64.2,459.8 L77.6,446.2" stroke="#a06262" stroke-width="1" fill="none"/>
    <!-- camera -->
    <rect x="108.8" y="449" width="9.8" height="7.8" rx="1.6" fill="#dcdcdc"/>
    <path d="M119.3,451.8 L122.5,449.6 L122.5,456.2 L119.3,454 Z" fill="#dcdcdc"/>
    <!-- shield -->
    <path d="M263.5,446.9 C261.8,448.2 260,448.8 258,449 L258,453 C258,456.2 260.2,458.4 263.5,459.6 C266.8,458.4 269,456.2 269,453 L269,449 C267,448.8 265.2,448.2 263.5,446.9 Z" fill="none" stroke="#dcdcdc" stroke-width="1.1"/>
    <path d="M263.5,447 C261.8,448.3 260,448.8 258,449 L258,453 L263.5,453 Z" fill="#dcdcdc"/>
    <path d="M263.5,453 L269,453 C269,456.2 266.8,458.4 263.5,459.6 Z" fill="#dcdcdc"/>
    <!-- participants -->
    <circle cx="306.2" cy="450.3" r="2.6" fill="#dcdcdc"/>
    <circle cx="312.2" cy="451" r="2.1" fill="#dcdcdc"/>
    <path d="M301.4,458 C301.4,454.6 303.4,453.7 306.2,453.7 C309,453.7 311,454.6 311,458 Z" fill="#dcdcdc"/>
    <path d="M311.6,458 C311.7,456.4 311.4,455.3 310.8,454.5 C311.2,454.3 311.7,454.2 312.3,454.2 C314.3,454.2 315.5,455.2 315.5,458 Z" fill="#dcdcdc"/>
    <!-- chat -->
    <path d="M348.6,447.7 L357.4,447.7 C358.5,447.7 359,448.4 359,449.3 L359,454.6 C359,455.5 358.5,456.2 357.4,456.2 L352.2,456.2 L349.6,458.6 L349.9,456.2 L348.6,456.2 C347.5,456.2 347,455.5 347,454.6 L347,449.3 C347,448.4 347.5,447.7 348.6,447.7 Z" fill="#dcdcdc"/>
    <!-- share -->
    <rect x="391" y="447.6" width="14.2" height="10.3" rx="1.8" fill="#47c52c"/>
    <path d="M398.1,450 L400.3,452.6 L398.8,452.6 L398.8,455.6 L397.4,455.6 L397.4,452.6 L395.9,452.6 Z" fill="#143a0c"/>
    <!-- record -->
    <circle cx="442.9" cy="453" r="5.6" fill="none" stroke="#d4d4d4" stroke-width="1"/>
    <circle cx="442.9" cy="453" r="4.1" fill="#dcdcdc"/>
    <!-- reactions -->
    <circle cx="487.9" cy="453.6" r="5.2" fill="#dcdcdc"/>
    <circle cx="486.1" cy="452.2" r=".75" fill="#1b1d1e"/>
    <circle cx="489.7" cy="452.2" r=".75" fill="#1b1d1e"/>
    <path d="M485.3,454.6 C486.3,456.8 489.5,456.8 490.5,454.6" stroke="#1b1d1e" stroke-width=".9" fill="none"/>
    <circle cx="492.2" cy="448.4" r="2.3" fill="#1b1d1e"/>
    <path d="M490.6,448.3 L493.8,448.3 M492.2,446.7 L492.2,449.9" stroke="#cfcfcf" stroke-width=".9"/>
  </g>
</svg>

<div class="label" style="left:53.6px;top:342px;width:71px;text-indent:4.1px;background:rgba(30,27,25,.93);">Christian Lunde</div>
<div class="label" style="left:378.7px;top:342px;width:74.2px;text-indent:4.8px;letter-spacing:-0.1px;">Sincerely Media</div>
<div id="end">End Meeting</div>
</body>
</html>
